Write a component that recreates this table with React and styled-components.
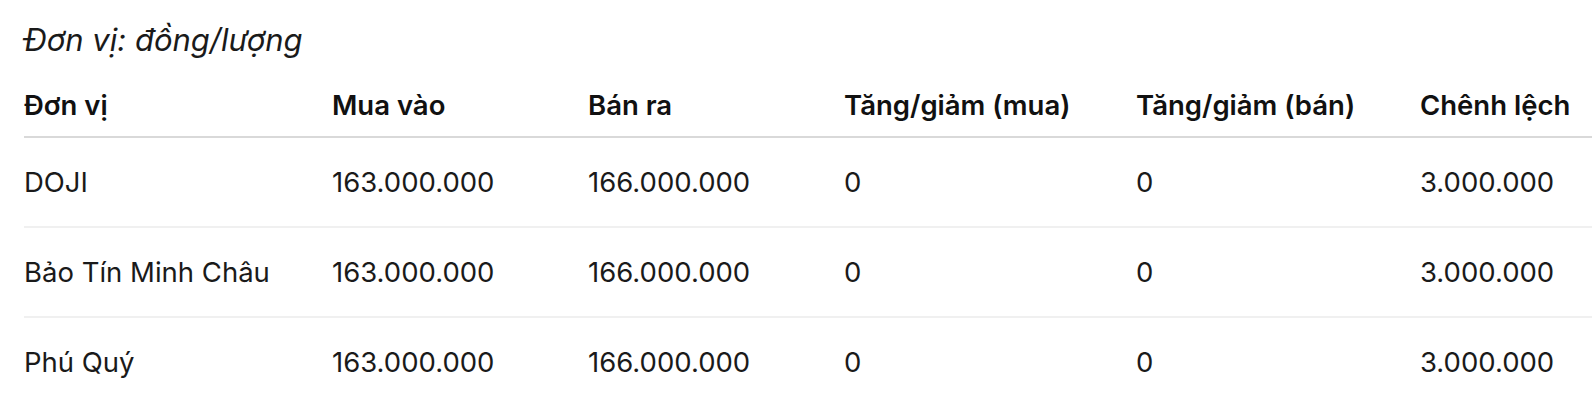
import React from "react";
import styled, { createGlobalStyle } from "styled-components";

const Global = createGlobalStyle`
  html, body { margin: 0; padding: 0; background: #fff; }
  body { font-family: Inter, "Noto Sans", "Liberation Sans", sans-serif; color: #111; }
`;

const Page = styled.div`
  padding: 0 0 0 24px;
`;

const Unit = styled.div`
  font-size: 31px;
  font-style: italic;
  line-height: 40px;
  margin: 20px 0 14px;
  color: #1a1a1a;
`;

const Table = styled.table`
  width: 100%;
  border-collapse: collapse;
  table-layout: fixed;
`;

const Th = styled.th`
  text-align: left;
  font-weight: 600;
  font-size: 27.5px;
  height: 62px;
  padding: 0;
  border-bottom: 2px solid #d9d9d9;
  white-space: nowrap;
  color: #111;
`;

const Td = styled.td`
  font-size: 27.5px;
  height: 88px;
  padding: 0;
  white-space: nowrap;
  color: #1a1a1a;
  border-bottom: 2px solid ${(p) => (p.$last ? "transparent" : "#f0f0f0")};
`;

const cols = [308, 256, 256, 292, 284, 172];
const headers = ["Đơn vị", "Mua vào", "Bán ra", "Tăng/giảm (mua)", "Tăng/giảm (bán)", "Chênh lệch"];
const rows = [
  ["DOJI", "163.000.000", "166.000.000", "0", "0", "3.000.000"],
  ["Bảo Tín Minh Châu", "163.000.000", "166.000.000", "0", "0", "3.000.000"],
  ["Phú Quý", "163.000.000", "166.000.000", "0", "0", "3.000.000"],
];

export default function App() {
  return (
    <Page>
      <Global />
      <Unit>Đơn vị: đồng/lượng</Unit>
      <Table>
        <colgroup>
          {cols.map((w, i) => (
            <col key={i} style={{ width: w }} />
          ))}
        </colgroup>
        <thead>
          <tr>
            {headers.map((h) => (
              <Th key={h}>{h}</Th>
            ))}
          </tr>
        </thead>
        <tbody>
          {rows.map((r, i) => (
            <tr key={i}>
              {r.map((c, j) => (
                <Td key={j} $last={i === rows.length - 1}>{c}</Td>
              ))}
            </tr>
          ))}
        </tbody>
      </Table>
    </Page>
  );
}
